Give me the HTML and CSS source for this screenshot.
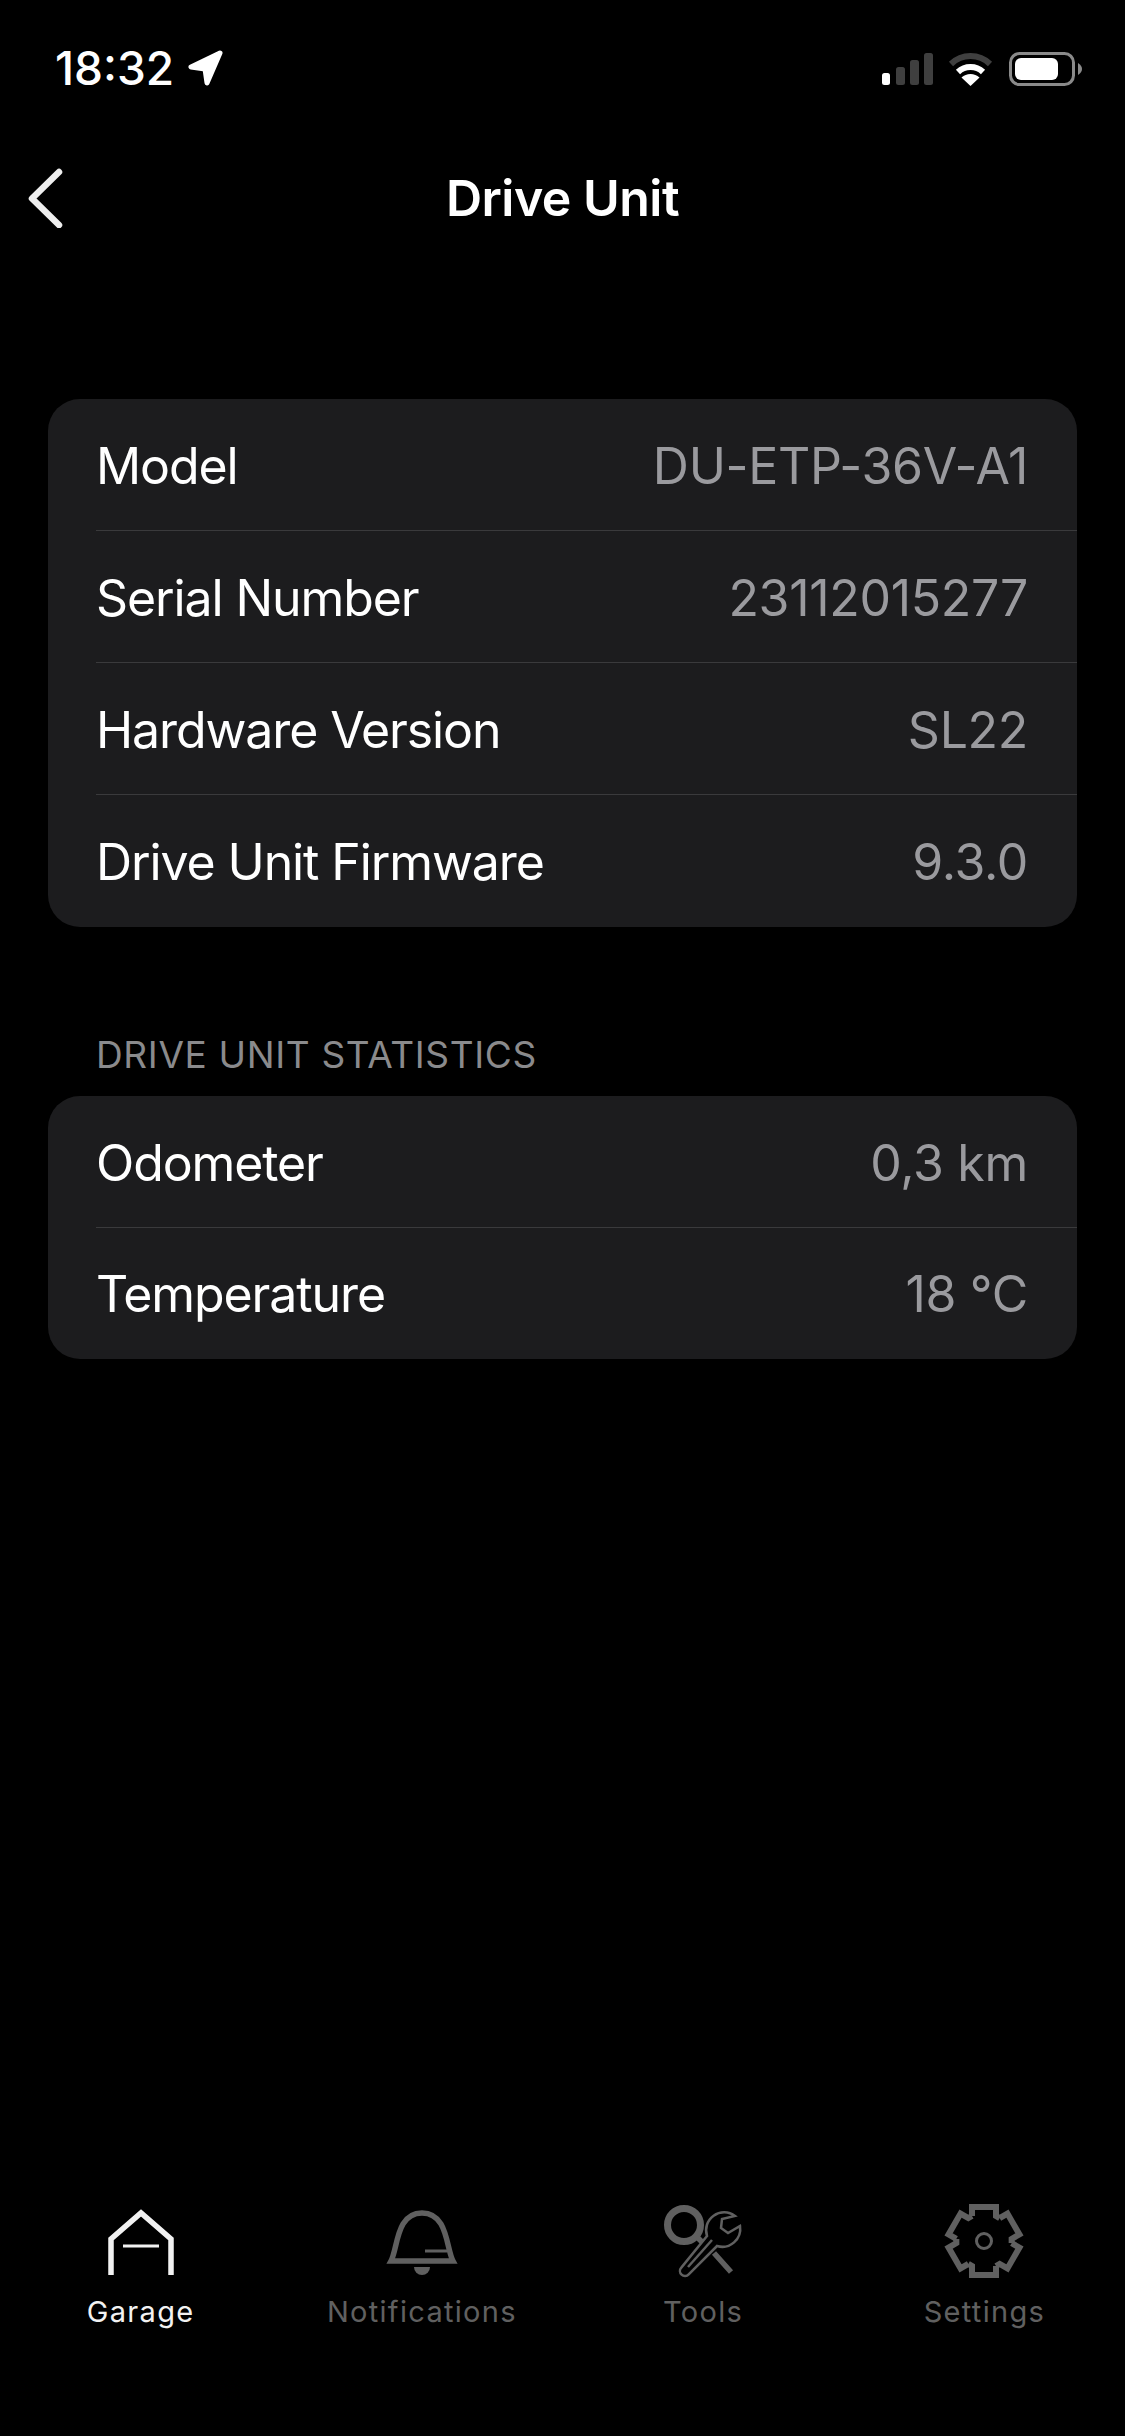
FILE: index.html
```html
<!DOCTYPE html>
<html lang="en">
<head>
    <meta charset="UTF-8">
    <meta name="viewport" content="width=device-width, initial-scale=1.0">
    <title>Drive Unit</title>
    <link rel="stylesheet" href="styles.css">
</head>
<body>
    <div class="status-bar">
        <div class="status-left">
            <span class="time">18:32</span>
            <svg class="location" viewBox="0 0 36 36"><path d="M32 3 L3 17 L17 19 L19 33 Z"/></svg>
        </div>
        <div class="status-right">
            <svg class="signal" viewBox="0 0 51 32">
                <rect class="on" x="0" y="20" width="8" height="12" rx="2.5"/>
                <rect class="off" x="14" y="14" width="9" height="18" rx="2.5"/>
                <rect class="off" x="28" y="7" width="9" height="25" rx="2.5"/>
                <rect class="off" x="42" y="0" width="9" height="32" rx="2.5"/>
            </svg>
            <svg class="wifi" viewBox="0 0 45 33">
                <path class="wifi-outer" d="M3 11 A28 28 0 0 1 42 11"/>
                <path class="wifi-mid" d="M10 19 A18 18 0 0 1 35 19"/>
                <path class="wifi-dot" d="M22.5 33 L13.5 24.5 A13 13 0 0 1 31.5 24.5 Z"/>
            </svg>
            <svg class="battery" viewBox="0 0 73 34">
                <rect class="battery-case" x="1.5" y="1.5" width="63" height="31" rx="9"/>
                <rect class="battery-level" x="6" y="6" width="43" height="22" rx="6"/>
                <path class="battery-nub" d="M69 11 C72 13 73 15 73 17 C73 19 72 21 69 23 Z"/>
            </svg>
        </div>
    </div>

    <div class="header">
        <div class="back">
            <svg viewBox="0 0 36 60"><path d="M32 4 L5 30.500 L32 57"/></svg>
        </div>
        <h1>Drive Unit</h1>
        <div></div>
    </div>

    <div class="content">
        <div class="card card-info">
            <div class="row"><span class="label">Model</span><span class="value">DU-ETP-36V-A1</span></div>
            <div class="row"><span class="label">Serial Number</span><span class="value">23112015277</span></div>
            <div class="row"><span class="label">Hardware Version</span><span class="value">SL22</span></div>
            <div class="row"><span class="label">Drive Unit Firmware</span><span class="value">9.3.0</span></div>
        </div>

        <div class="section-title">DRIVE UNIT STATISTICS</div>

        <div class="card">
            <div class="row"><span class="label">Odometer</span><span class="value">0,3 km</span></div>
            <div class="row"><span class="label">Temperature</span><span class="value">18 °C</span></div>
        </div>
    </div>

    <div class="tab-bar">
        <div class="tab active">
            <svg viewBox="0 0 90 76">
                <path class="thick" d="M15 72 V36 L45 10 L75 36 V72"/>
                <path class="thin" d="M27 43 H63"/>
            </svg>
            <span>Garage</span>
        </div>
        <div class="tab">
            <svg viewBox="0 0 90 76">
                <path class="thick" d="M14 58 H76 C69 45 71 10 45 10 C19 10 21 45 14 58 Z"/>
                <path class="thin" d="M48 48 H70"/>
                <path class="solid" d="M37 64 H53 A8 8 0 0 1 37 64 Z"/>
            </svg>
            <span>Notifications</span>
        </div>
        <div class="tab">
            <svg viewBox="0 0 90 76">
                <circle class="heavy" cx="26" cy="22" r="16.500"/>
                <path class="thick" d="M39 34 L44 39 M56 50 L73 69"/>
                <path class="hair" d="M30.700 71.400 L59 43 A18 18 0 0 0 82 23 L70 30 L63 25 L64 16 L77 13 A18 18 0 0 0 49 33 L23.300 64.600 A5 5 0 0 0 30.700 71.400 Z"/>
                <path class="hair" d="M30 64 L54 37"/>
            </svg>
            <span>Tools</span>
        </div>
        <div class="tab">
            <svg viewBox="0 0 90 76">
                <g class="gear">
                    <path d="M-12 -25 V-34 H12 V-25 L15.650 -22.900"/>
                    <path transform="rotate(60)" d="M-12 -25 V-34 H12 V-25 L15.650 -22.900"/>
                    <path transform="rotate(120)" d="M-12 -25 V-34 H12 V-25 L15.650 -22.900"/>
                    <path transform="rotate(180)" d="M-12 -25 V-34 H12 V-25 L15.650 -22.900"/>
                    <path transform="rotate(240)" d="M-12 -25 V-34 H12 V-25 L15.650 -22.900"/>
                    <path transform="rotate(300)" d="M-12 -25 V-34 H12 V-25 L15.650 -22.900"/>
                    <circle class="gear-hole" r="7.500"/>
                </g>
            </svg>
            <span>Settings</span>
        </div>
    </div>
</body>
</html>
```

FILE: styles.css
```css
* {
    box-sizing: border-box;
}
body {
    margin: 0;
    height: 2436px;
    display: flex;
    flex-direction: column;
    background-color: #000;
    color: #fff;
    font-family: Inter, "Liberation Sans", sans-serif;
    overflow: hidden;
}

/* status bar */
.status-bar {
    height: 130px;
    padding: 44px 43px 0 55px;
    display: flex;
    justify-content: space-between;
    align-items: flex-start;
}
.status-left {
    display: flex;
    align-items: center;
    height: 48px;
}
.time {
    font-size: 46px;
    font-weight: 500;
    letter-spacing: 0;
}
.location {
    width: 36px;
    height: 36px;
    margin-left: 14px;
    fill: #fff;
    stroke: #fff;
    stroke-width: 5;
    stroke-linejoin: round;
}
.status-right {
    display: flex;
    align-items: center;
    height: 50px;
}
.signal {
    width: 51px;
    height: 32px;
}
.signal .on {
    fill: #fff;
}
.signal .off {
    fill: #3f3f3f;
}
.wifi {
    width: 45px;
    height: 33px;
    margin-left: 15px;
    fill: none;
}
.wifi-outer {
    stroke: #3f3f3f;
    stroke-width: 6;
}
.wifi-mid {
    stroke: #fff;
    stroke-width: 6;
}
.wifi-dot {
    fill: #fff;
}
.battery {
    width: 73px;
    height: 34px;
    margin-left: 16px;
}
.battery-case {
    fill: none;
    stroke: #8a8a8a;
    stroke-width: 3;
}
.battery-level {
    fill: #fff;
}
.battery-nub {
    fill: #8a8a8a;
}

/* nav header */
.header {
    height: 136px;
    display: grid;
    grid-template-columns: 1fr auto 1fr;
    align-items: center;
}
.header h1 {
    margin: 0;
    font-size: 50px;
    font-weight: 600;
    letter-spacing: -0.5px;
}
.back {
    padding-left: 27px;
    display: flex;
}
.back svg {
    width: 36px;
    height: 60px;
    fill: none;
    stroke: #eee;
    stroke-width: 6.5;
    stroke-linecap: round;
    stroke-linejoin: round;
}

/* lists */
.content {
    padding: 133px 48px 0;
}
.card {
    background-color: #1c1c1e;
    border-radius: 32px;
    overflow: hidden;
}
.row {
    height: 132px;
    margin-left: 48px;
    padding: 2px 49px 0 0;
    display: flex;
    justify-content: space-between;
    align-items: center;
    border-bottom: 1px solid #3a3a3c;
    font-size: 50px;
    font-weight: 400;
    letter-spacing: -1.1px;
}
.row:last-child {
    height: 131px;
    padding-top: 0;
    border-bottom: none;
}
.card-info .row:last-child {
    height: 132px;
    padding-top: 2px;
}
.value {
    color: #9a9a9e;
    letter-spacing: -0.3px;
}
.section-title {
    height: 169px;
    padding: 104px 0 0 48px;
    font-size: 37px;
    line-height: 48px;
    color: #8a8a8c;
    letter-spacing: 0.65px;
}

/* tabs */
.tab-bar {
    margin-top: auto;
    padding-bottom: 106px;
    display: grid;
    grid-template-columns: repeat(4, 1fr);
}
.tab {
    display: flex;
    flex-direction: column;
    align-items: center;
    color: #606060;
    font-size: 29px;
    line-height: 36px;
    letter-spacing: 1.3px;
}
.tab.active {
    color: #f2f2f2;
}
.tab svg {
    width: 90px;
    height: 76px;
    margin-bottom: 15px;
    fill: none;
    stroke: currentColor;
}
.thick {
    stroke-width: 5.5;
}
.heavy {
    stroke-width: 7;
}
.thin {
    stroke-width: 3;
}
.hair {
    stroke-width: 2.5;
}
.solid {
    fill: currentColor;
    stroke: none;
}
.gear {
    transform: translate(45px, 38px);
    stroke-width: 6;
}
.gear-hole {
    stroke-width: 3;
}
```
